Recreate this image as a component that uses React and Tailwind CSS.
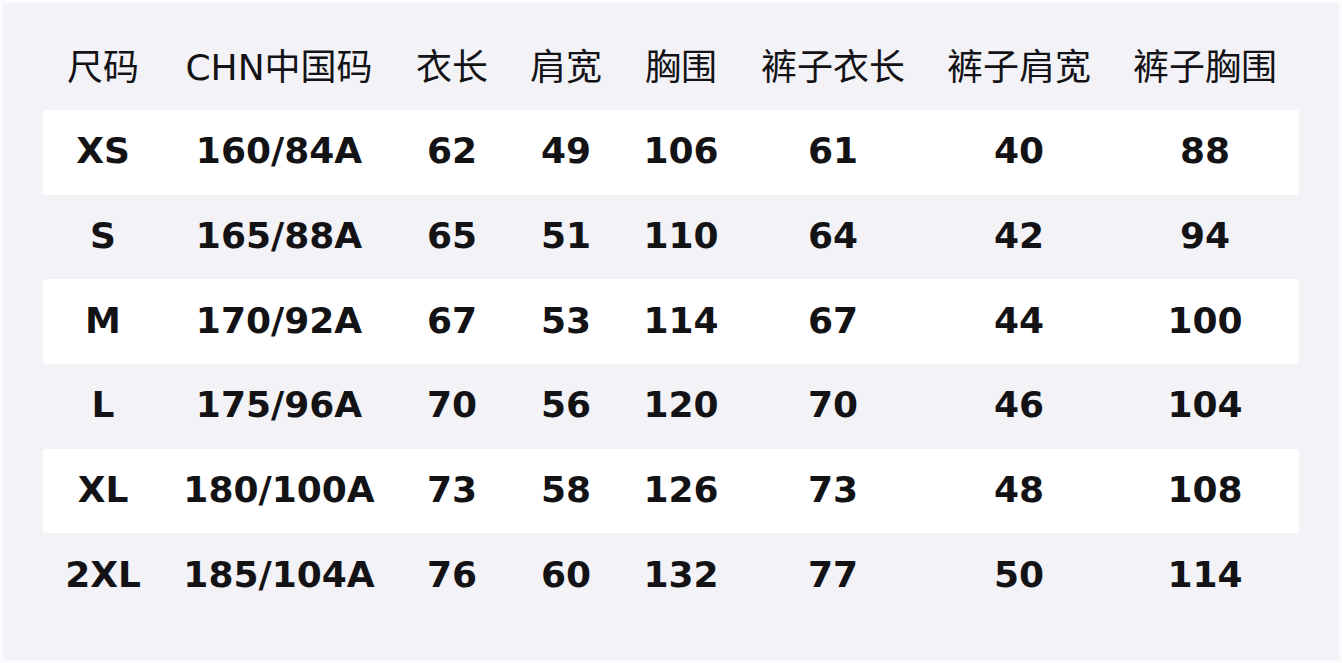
import React from "react";

const headers = ["尺码", "CHN中国码", "衣长", "肩宽", "胸围", "裤子衣长", "裤子肩宽", "裤子胸围"];

const rows = [
  ["XS", "160/84A", "62", "49", "106", "61", "40", "88"],
  ["S", "165/88A", "65", "51", "110", "64", "42", "94"],
  ["M", "170/92A", "67", "53", "114", "67", "44", "100"],
  ["L", "175/96A", "70", "56", "120", "70", "46", "104"],
  ["XL", "180/100A", "73", "58", "126", "73", "48", "108"],
  ["2XL", "185/104A", "76", "60", "132", "77", "50", "114"],
];

const cols = "grid grid-cols-[120px_232px_114px_114px_116px_188px_184px_188px]";

const App = () => {
  return (
    <div className="w-[1342px] h-[663px] bg-[#fbfbfd] p-[3px]" style={{ fontFamily: '"DejaVu Sans", "Noto Sans CJK SC", sans-serif' }}>
      <div className="w-full h-full bg-[#f2f2f7] px-10 pt-[22px] text-[#131316]">
        <div className={`${cols} h-[85px] items-center`}>
          {headers.map((h) => (
            <div key={h} className="text-center text-[36px] leading-none">
              {h}
            </div>
          ))}
        </div>
        {rows.map((row, i) => (
          <div
            key={row[0]}
            className={`${cols} h-[84.7px] items-center rounded-[3px] ${i % 2 === 0 ? "bg-white" : ""}`}
          >
            {row.map((cell, j) => (
              <div key={j} className="text-center text-[36px] font-bold leading-none -mt-[2px]">
                {cell}
              </div>
            ))}
          </div>
        ))}
      </div>
    </div>
  );
};

export default App;
